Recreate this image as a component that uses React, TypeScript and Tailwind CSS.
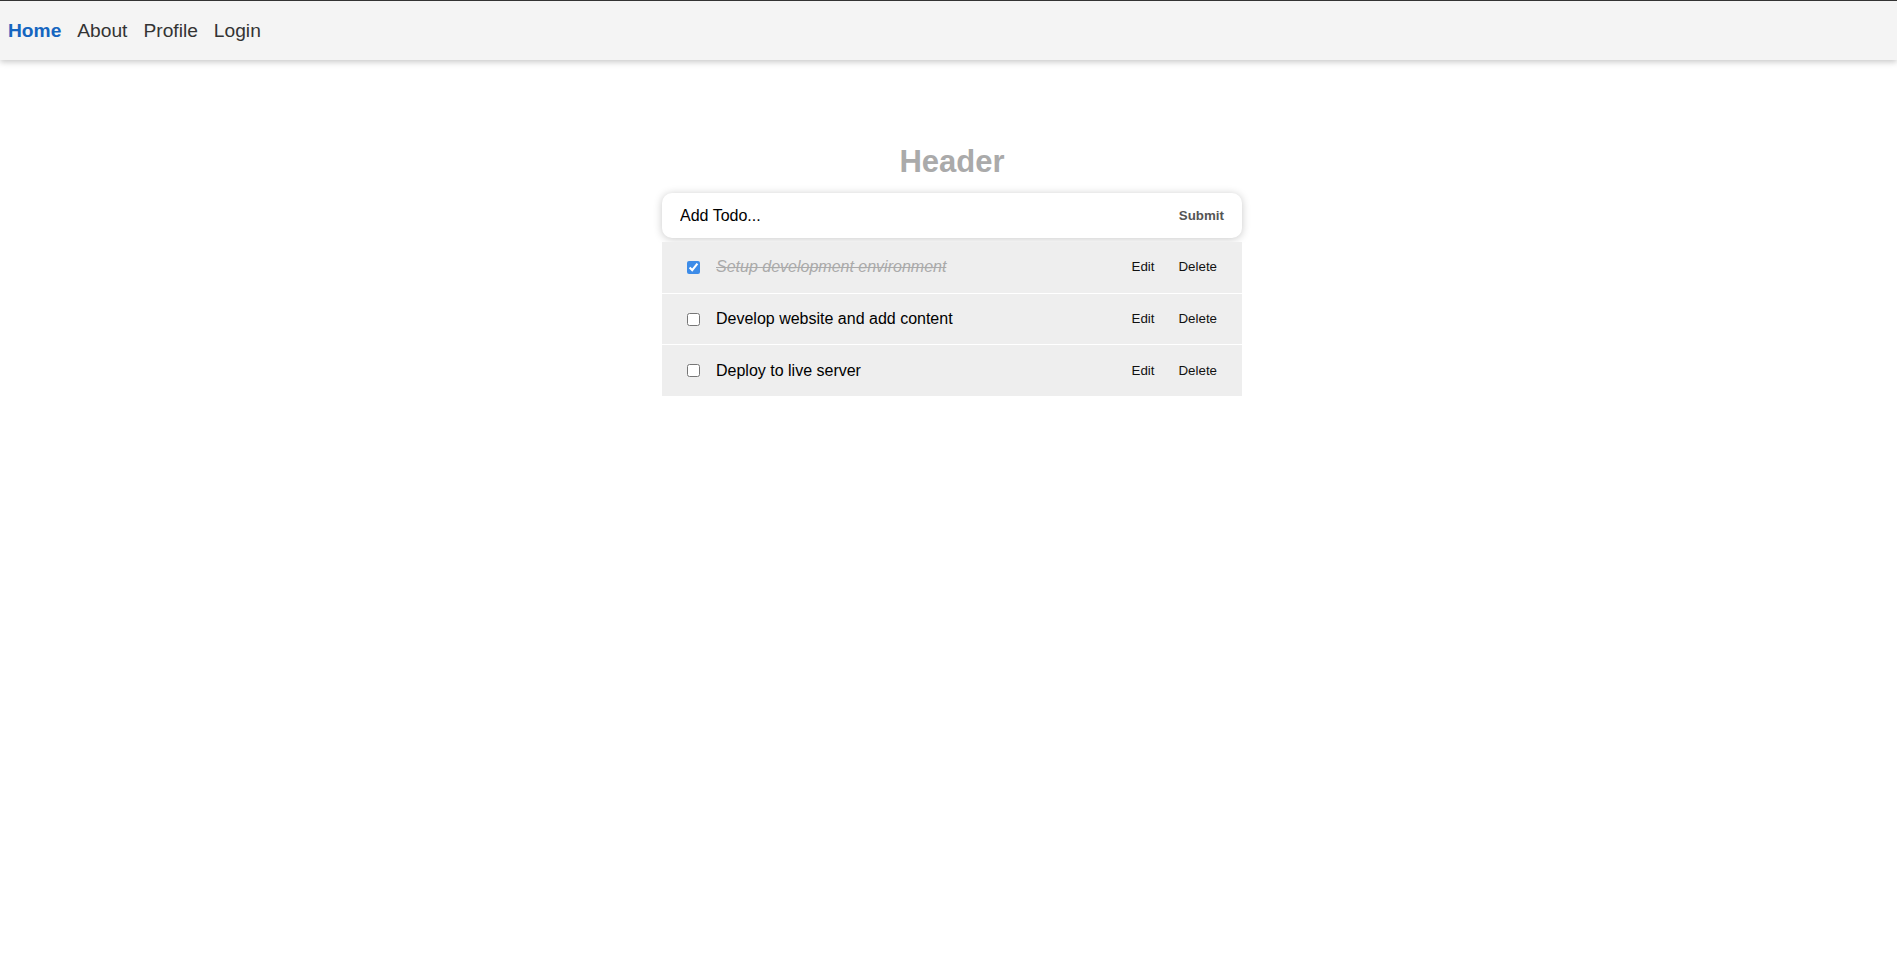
import React, { useState } from 'react';

interface Todo {
  id: number;
  title: string;
  completed: boolean;
}

const initialTodos: Todo[] = [
  { id: 1, title: 'Setup development environment', completed: true },
  { id: 2, title: 'Develop website and add content', completed: false },
  { id: 3, title: 'Deploy to live server', completed: false },
];

const font = { fontFamily: '"Liberation Sans", Arial, sans-serif' };

const Navbar: React.FC = () => {
  const links = ['Home', 'About', 'Profile', 'Login'];
  return (
    <nav className="relative z-10 flex h-[60px] items-center border-t border-[#333] bg-[#f4f4f4] shadow-[0_2px_6px_rgba(0,0,0,0.22)]">
      {links.map((link, i) => (
        <a
          key={link}
          href="#"
          className={
            i === 0
              ? 'px-2 text-[19.2px] font-bold leading-none text-[#1565c0]'
              : 'px-2 text-[19.2px] leading-none text-[#333]'
          }
        >
          {link}
        </a>
      ))}
    </nav>
  );
};

const App: React.FC = () => {
  const [todos, setTodos] = useState<Todo[]>(initialTodos);

  const toggle = (id: number) =>
    setTodos(todos.map((t) => (t.id === id ? { ...t, completed: !t.completed } : t)));

  return (
    <div className="min-h-screen bg-white" style={font}>
      <Navbar />

      <div className="flex justify-center pl-[7px]">
        <div className="w-[580px]">
          <h1 className="mt-[86px] text-center text-[31px] font-bold leading-none text-[#aaa]">Header</h1>

          {/* Add todo form */}
          <form
            className="mt-[16px] flex h-[45px] items-center rounded-[10px] bg-white pl-[18px] pr-[18px] shadow-[0_1px_8px_rgba(0,0,0,0.22)]"
            onSubmit={(e) => e.preventDefault()}
          >
            <input
              type="text"
              placeholder="Add Todo..."
              className="flex-1 bg-transparent text-[16px] text-black outline-none placeholder:text-black"
            />
            <button type="submit" className="text-[13.33px] font-bold text-[#555]">
              Submit
            </button>
          </form>

          {/* Todo list */}
          <ul className="mt-[4px] bg-[#eee]">
            {todos.map((todo, i) => (
              <li
                key={todo.id}
                className={
                  i < todos.length - 1
                    ? 'flex h-[51.7px] items-center border-b border-white'
                    : 'flex h-[50.7px] items-center'
                }
              >
                <input
                  type="checkbox"
                  checked={todo.completed}
                  onChange={() => toggle(todo.id)}
                  className="m-0 ml-[25px] h-[13px] w-[13px] accent-[#3d8ce8]"
                />
                <span
                  className={
                    todo.completed
                      ? 'ml-[16px] flex-1 text-[16px] italic text-[#aaa] line-through'
                      : 'ml-[16px] flex-1 text-[16px] text-black'
                  }
                >
                  {todo.title}
                </span>
                <button className="text-[13.33px] text-[#111]">Edit</button>
                <button className="ml-[24px] mr-[25px] text-[13.33px] text-[#111]">Delete</button>
              </li>
            ))}
          </ul>
        </div>
      </div>
    </div>
  );
};

export default App;
